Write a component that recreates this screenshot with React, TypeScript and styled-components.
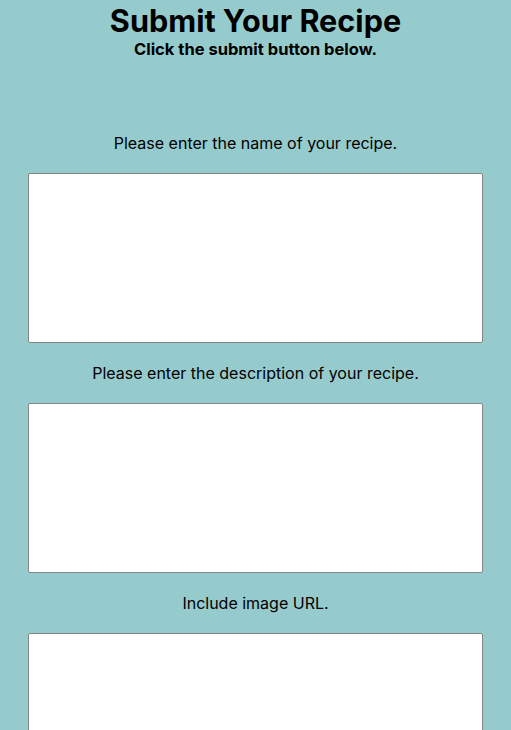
import React from 'react'
import styled, { createGlobalStyle } from 'styled-components'

const GlobalStyle = createGlobalStyle`
  html, body {
    margin: 0;
    padding: 0;
    background-color: #96cbcd;
    font-family: Inter, "Liberation Sans", sans-serif;
    color: #000;
  }
`

const Page = styled.div`
  display: flex;
  flex-direction: column;
  align-items: center;
  min-height: 730px;
`

const Title = styled.h1`
  margin: 3px 0 0;
  font-size: 30.6px;
  line-height: 36px;
  font-weight: 700;
`

const Subtitle = styled.h2`
  margin: 0;
  font-size: 16.5px;
  line-height: 20px;
  font-weight: 700;
`

const Form = styled.form`
  display: flex;
  flex-direction: column;
  align-items: center;
  padding-top: 54px;
`

const Label = styled.label`
  display: block;
  font-size: 16px;
  line-height: 60px;
  text-align: center;
`

const Field = styled.textarea`
  box-sizing: border-box;
  width: 455px;
  height: 170px;
  background: #fff;
  border: 1px solid #858585;
  border-radius: 2px;
  resize: none;
  margin: 0;
  padding: 4px;
  font-family: inherit;
`

const fields = [
  { id: 'name', label: 'Please enter the name of your recipe.' },
  { id: 'description', label: 'Please enter the description of your recipe.' },
  { id: 'image', label: 'Include image URL.' },
]

const App: React.FC = () => {
  return (
    <>
      <GlobalStyle />
      <Page>
        <Title>Submit Your Recipe</Title>
        <Subtitle>Click the submit button below.</Subtitle>
        <Form>
          {fields.map((f) => (
            <React.Fragment key={f.id}>
              <Label htmlFor={f.id}>{f.label}</Label>
              <Field id={f.id} />
            </React.Fragment>
          ))}
        </Form>
      </Page>
    </>
  )
}

export default App
